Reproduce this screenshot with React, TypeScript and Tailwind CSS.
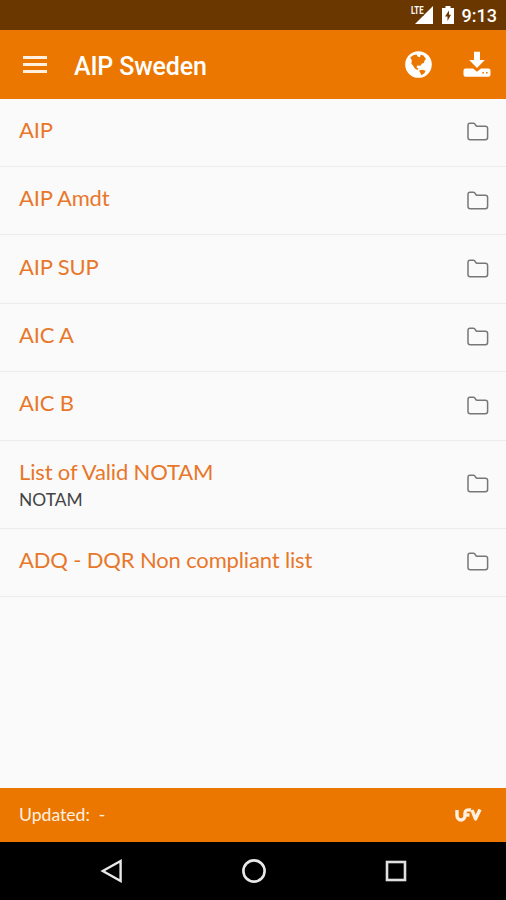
type ListEntry = {
  title: string;
  subtitle?: string;
};

const entries: ListEntry[] = [
  { title: "AIP" },
  { title: "AIP Amdt" },
  { title: "AIP SUP" },
  { title: "AIC A" },
  { title: "AIC B" },
  { title: "List of Valid NOTAM", subtitle: "NOTAM" },
  { title: "ADQ - DQR Non compliant list" },
];

function FolderIcon() {
  return (
    <svg width="22" height="20" viewBox="0 0 22 20" fill="none" stroke="#777" strokeWidth="1.5" strokeLinejoin="round">
      <path d="M1 3.5C1 2 1.8 1.3 3 1.3H6.5C7.6 1.3 8 2 8.4 2.9C8.8 3.8 9.3 4.3 10.4 4.3H18.2C19.8 4.3 20.6 5 20.6 6.5V15.5C20.6 17 19.8 17.7 18.4 17.7H3.2C1.8 17.7 1 17 1 15.5Z" />
    </svg>
  );
}

function GlobeIcon() {
  return (
    <svg width="27" height="27" viewBox="0 0 27 27" className="mr-[31px]">
      <circle cx="13.5" cy="13.5" r="13.3" fill="#fff" />
      <path
        d="M5.2 6.6L8.2 4.2L11.5 3.4L12.6 5.6L15 6.2L15.6 3.8L18.4 4.6L21 8L19.6 9.6L18.8 12L17 12.4L15.4 14.8L12.2 14.6L11.6 16.6L13.6 17.8L12.6 19L9.8 17.4L8 14.4L6.4 12.8L6.8 9.2Z"
        fill="#eb7700"
      />
      <path d="M14 19.6L17.2 18.8L20.6 19.8L19.4 22.2L16.4 24.2L15.4 22Z" fill="#eb7700" />
    </svg>
  );
}

function DownloadIcon() {
  return (
    <svg width="28" height="27" viewBox="0 0 28 27" fill="#fff">
      <path d="M11 0.7H17V9H21.8L14 17L6.2 9H11Z" />
      <path fillRule="evenodd" d="M2.5 17.5H10L14 20.8L18 17.5H25.5Q27.5 17.5 27.5 19.5V23.8Q27.5 25.8 25.5 25.8H2.5Q0.5 25.8 0.5 23.8V19.5Q0.5 17.5 2.5 17.5ZM19.3 21V22.6H20.9V21ZM23 21V22.6H24.6V21Z" />
    </svg>
  );
}

function StatusBar() {
  return (
    <div className="flex h-[30px] shrink-0 items-center justify-end bg-[#6b3700] pr-[9px]">
      <svg width="24" height="20" viewBox="0 0 24 20" className="mr-[8px]">
        <path d="M23 1V19H5Z" fill="#fff" />
        <rect width="14" height="10.5" fill="#6b3700" />
        <text x="1" y="9" fill="#fff" fontFamily="Roboto, sans-serif" fontSize="10.5" fontWeight="700" textLength="12.5" lengthAdjust="spacingAndGlyphs">LTE</text>
      </svg>
      <svg width="12" height="18" viewBox="0 0 12 18" className="mr-[8px]">
        <path d="M3.5 0H8.5V2H12V18H0V2H3.5Z" fill="#fff" />
        <path d="M7 4.5L3 10.5H5.5V15L9 8.8H7Z" fill="#6b3700" />
      </svg>
      <span className="mt-[2px] text-[18px] font-medium leading-none text-white">9:13</span>
    </div>
  );
}

function AppBar() {
  return (
    <header className="flex h-[68.6px] shrink-0 items-center bg-[#eb7700] pl-[23px] pr-[15px] text-white">
      <div className="flex w-6 flex-col gap-[4px]">
        <span className="h-[3px] bg-[#fff0e0]" />
        <span className="h-[3px] bg-[#fff0e0]" />
        <span className="h-[3px] bg-[#fff0e0]" />
      </div>
      <h1 className="ml-[27px] mt-[4px] flex-1 text-[25px] font-medium leading-none tracking-[-0.15px]">AIP Sweden</h1>
      <GlobeIcon />
      <DownloadIcon />
    </header>
  );
}

function ListRow({ title, subtitle }: ListEntry) {
  return (
    <li className={`flex shrink-0 items-center justify-between border-b border-[#ececec] pl-[19px] pr-[17px] ${subtitle ? "h-[88px]" : "h-[68.4px]"}`}>
      <div className={subtitle ? "pt-[3px]" : "pb-[5px]"}>
        <p className="text-[22px] leading-7 tracking-[-0.15px] text-[#e8772a]">{title}</p>
        {subtitle && <p className="text-[17.4px] leading-[27px] text-[#444]">{subtitle}</p>}
      </div>
      <FolderIcon />
    </li>
  );
}

function Footer() {
  return (
    <footer className="flex h-[54px] shrink-0 items-center justify-between bg-[#eb7700] pl-[19px] pr-[24px]">
      <span className="mt-px whitespace-pre font-[Lato,sans-serif] text-[17.6px] text-[#fff0e0]">Updated:  -</span>
      <svg width="27" height="14" viewBox="0 0 27 14" fill="none" stroke="#fff0e0" strokeWidth="3.4" strokeLinejoin="round">
        <path d="M2 2V7.5C2 13.5 10 13.5 10 7.5V5C10 2 12 1.5 16 2" />
        <path d="M10 7H14.5" />
        <path d="M17 2L20.5 11L25 1.5" />
      </svg>
    </footer>
  );
}

function NavigationBar() {
  return (
    <nav className="flex h-[58px] shrink-0 items-center justify-between bg-black pl-[100px] pr-[98px]">
      <svg width="24" height="26" viewBox="0 0 24 26" fill="none" stroke="#e8e8e8" strokeWidth="2.4">
        <path d="M20.6 3V23L2.8 13Z" />
      </svg>
      <svg width="26" height="26" viewBox="0 0 26 26" fill="none" stroke="#e8e8e8" strokeWidth="2.6">
        <circle cx="13" cy="13" r="10.6" />
      </svg>
      <svg width="24" height="24" viewBox="0 0 24 24" fill="none" stroke="#e0e0e0" strokeWidth="2.6">
        <rect x="3" y="3" width="18" height="18" />
      </svg>
    </nav>
  );
}

export default function App() {
  return (
    <div className="flex h-[900px] w-[506px] flex-col overflow-hidden bg-[#fafafa] font-[Roboto,sans-serif]">
      <StatusBar />
      <AppBar />
      <ul className="flex flex-1 flex-col font-[Lato,sans-serif]">
        {entries.map((entry) => (
          <ListRow key={entry.title} {...entry} />
        ))}
      </ul>
      <Footer />
      <NavigationBar />
    </div>
  );
}
